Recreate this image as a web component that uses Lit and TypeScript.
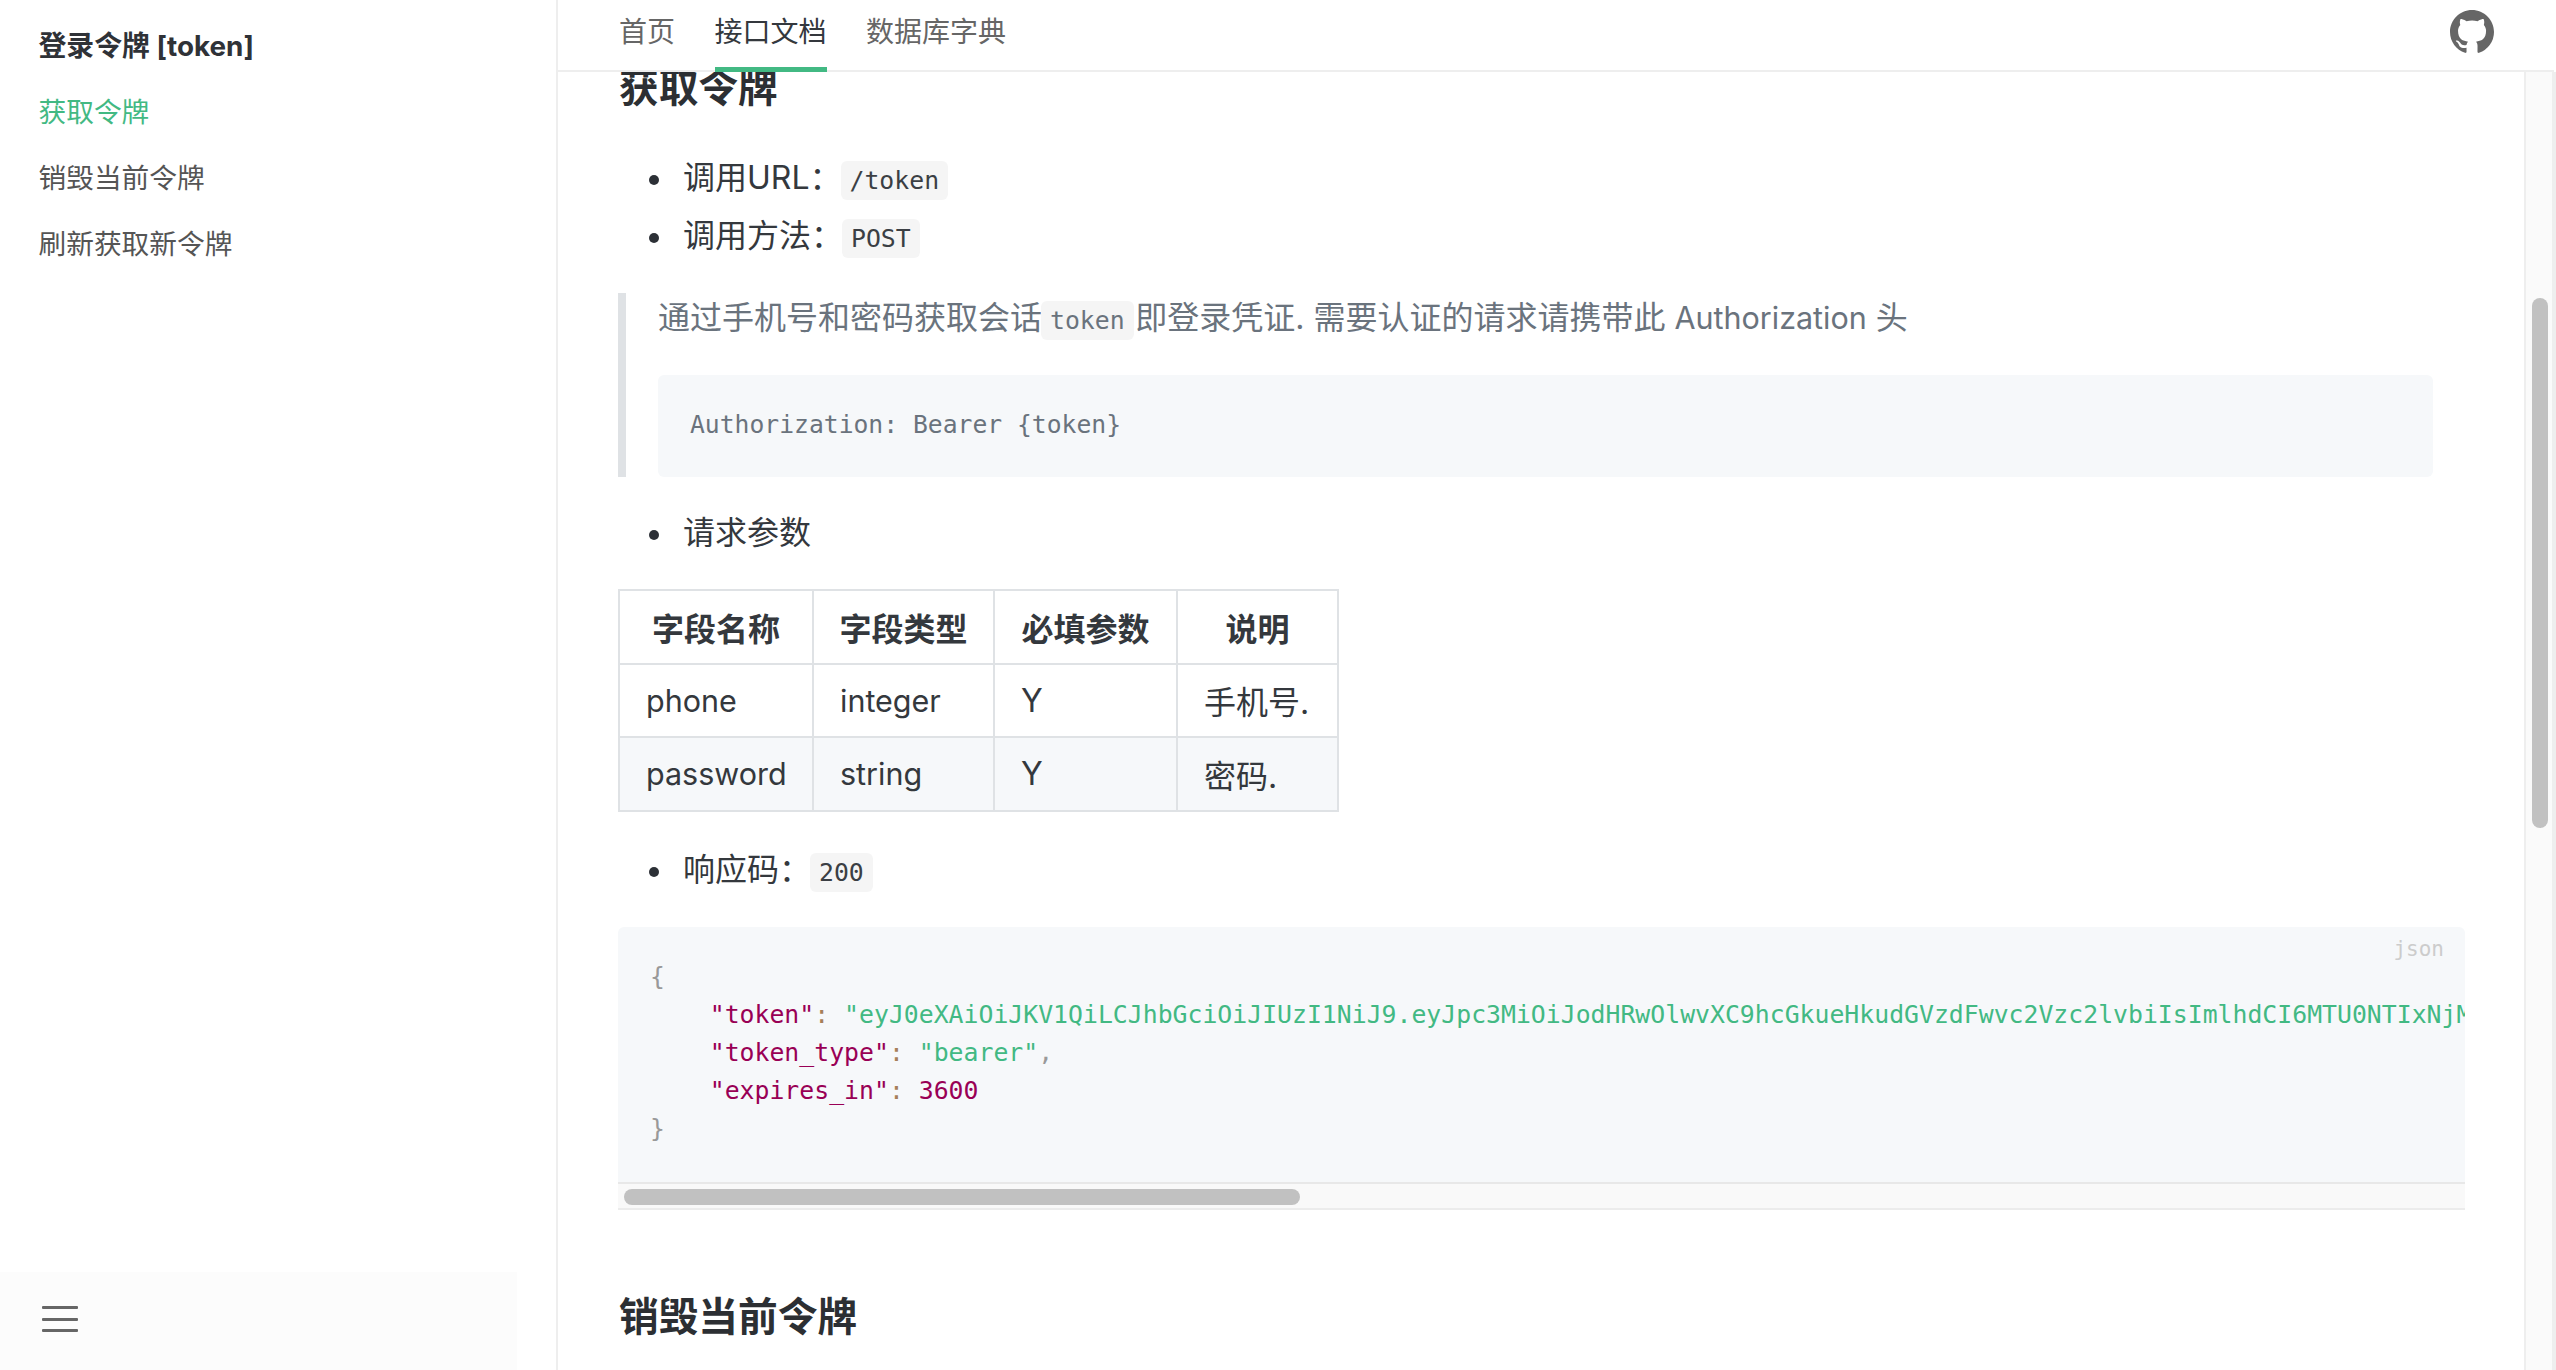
import { LitElement, html, css } from "lit";
import { customElement } from "lit/decorators.js";

const TOKEN = "eyJ0eXAiOiJKV1QiLCJhbGciOiJIUzI1NiJ9.eyJpc3MiOiJodHRwOlwvXC9hcGkueHkudGVzdFwvc2Vzc2lvbiIsImlhdCI6MTU0NTIxNjMzNSwiZXhwIjoxNTQ1MjE5OTM1";

@customElement("app-root")
export class AppRoot extends LitElement {
  static styles = css`
    :host {
      display: flex;
      width: 2556px;
      height: 1370px;
      overflow: hidden;
      background: #fff;
      color: #2c3e50;
      font-family: Inter, "Noto Sans CJK SC", sans-serif;
    }
    .sidebar {
      width: 556px;
      flex: none;
      display: flex;
      flex-direction: column;
      border-right: 2px solid #eee;
      box-sizing: content-box;
    }
    .side-nav {
      flex: 1;
      padding: 13px 0 0 38.5px;
      font-size: 27.7px;
    }
    .side-nav div {
      height: 66px;
      line-height: 66px;
      color: #555;
    }
    .side-nav .title { font-weight: 700; color: #2f3237; font-size: 27.85px; }
    .side-nav .active { color: #42b983; }
    .side-bottom {
      width: 517px;
      height: 98px;
      background: #fcfcfc;
      flex: none;
      padding: 34px 0 0 42px;
      box-sizing: border-box;
      display: flex;
      flex-direction: column;
      gap: 8.5px;
    }
    .side-bottom i {
      display: block;
      width: 36px;
      height: 3px;
      background: #666;
      border-radius: 1px;
    }
    .main {
      flex: 1;
      min-width: 0;
      display: flex;
      flex-direction: column;
    }
    .top {
      height: 72px;
      flex: none;
      box-sizing: border-box;
      border-bottom: 2px solid #eee;
      margin-right: 2px;
      padding: 0 60px 0 61px;
      display: flex;
      justify-content: space-between;
      background: #fff;
      position: relative;
      z-index: 2;
    }
    .tabs { display: flex; gap: 39.5px; font-size: 28px; color: #666; }
    .tab { height: 70px; line-height: 64px; box-sizing: border-box; }
    .tab.on { color: #34383d; border-bottom: 5px solid #42b983; height: 72px; }
    .gh { width: 44px; height: 44px; margin-top: 10px; fill: #666; }
    .body { flex: 1; display: flex; min-height: 0; }
    .content { flex: 1; min-width: 0; overflow: hidden; padding: 0 59px 0 60px; }
    article { margin-top: -9px; font-size: 32px; }
    h2 {
      margin: 0;
      font-size: 39.7px;
      line-height: 50px;
      font-weight: 700;
      color: #2c2f33;
      padding-left: 1px;
    }
    ul { margin: 0; padding: 0 0 0 65px; color: #34383d; list-style: none; }
    li { height: 58px; line-height: 58px; }
    li::before {
      content: "";
      display: inline-block;
      width: 10px;
      height: 10px;
      border-radius: 50%;
      background: #2c3036;
      vertical-align: middle;
      margin: 0 24px 0 -34px;
    }
    .u1 { margin-top: 36px; }
    code {
      font-family: "DejaVu Sans Mono", monospace;
      font-size: 24.8px;
      background: #f5f5f5;
      border-radius: 6px;
      padding: 5px 9px;
      color: #3b3f44;
      margin-left: -1px;
    }
    blockquote {
      margin: 28px 0 0;
      height: 184px;
      box-sizing: border-box;
      border-left: 8px solid #dfe2e5;
      padding: 0 32px;
      color: #6a737d;
    }
    blockquote p { margin: 0; height: 82px; line-height: 50px; }
    blockquote code { color: #6a737d; margin: 0 1.5px 0 -1px; }
    .la { font-size: 30.5px; }
    blockquote pre {
      margin: 0;
      height: 102px;
      line-height: 99px;
      background: #f6f8fa;
      border-radius: 6px;
      padding-left: 32px;
      font-family: "DejaVu Sans Mono", monospace;
      font-size: 24.7px;
    }
    .u2 { margin-top: 27px; }
    table {
      margin-top: 27px;
      border-collapse: collapse;
      font-size: 32px;
      color: #34383d;
      width: 719px;
      table-layout: fixed;
    }
    .c1 { width: 194px; }
    .c2 { width: 181px; }
    .c3 { width: 183px; }
    .c4 { width: 161px; }
    th, td {
      border: 2px solid #dfe2e5;
      height: 73.6px;
      padding: 0 20px 0 26px;
      box-sizing: border-box;
      text-align: left;
      font-weight: 400;
      white-space: nowrap;
    }
    th { font-weight: 700; text-align: center; padding: 0; }
    tr.alt td { background: #f6f8fa; }
    .u3 { margin-top: 29px; }
    .block {
      margin-top: 28px;
      position: relative;
      background: #f6f8fa;
      border-radius: 6px 6px 0 0;
      overflow: hidden;
      height: 283px;
    }
    .lang {
      position: absolute;
      top: 10px;
      right: 21px;
      font-family: "DejaVu Sans Mono", monospace;
      font-size: 21px;
      color: #ccc;
    }
    .block pre {
      margin: 0;
      height: 255px;
      box-sizing: border-box;
      padding: 31px 0 0 32px;
      line-height: 38px;
      font-family: "DejaVu Sans Mono", monospace;
      font-size: 24.8px;
      color: #999;
      overflow: hidden;
    }
    .k { color: #905; }
    .s { color: #42b983; }
    .p { color: #a67f59; }
    .hbar {
      height: 28px;
      box-sizing: border-box;
      background: #f9f9f9;
      border-top: 2px solid #e8e8e8;
      border-bottom: 2px solid #ececec;
      padding: 5px 0 0 6px;
    }
    .hbar i {
      display: block;
      width: 676px;
      height: 16px;
      border-radius: 8px;
      background: #c1c1c1;
    }
    .h2b { margin-top: 82px; }
    .vbar {
      width: 28px;
      flex: none;
      box-sizing: border-box;
      background: #fafafa;
      border-left: 2px solid #eee;
      padding: 226px 4px 0 6px;
    }
    .vbar i {
      display: block;
      height: 530px;
      border-radius: 8px;
      background: #c1c1c1;
    }
    .edge { width: 4px; flex: none; background: #eee; }
  `;

  render() {
    return html`
      <aside class="sidebar">
        <div class="side-nav">
          <div class="title">登录令牌 [token]</div>
          <div class="active">获取令牌</div>
          <div>销毁当前令牌</div>
          <div>刷新获取新令牌</div>
        </div>
        <div class="side-bottom"><i></i><i></i><i></i></div>
      </aside>
      <div class="main">
        <header class="top">
          <nav class="tabs">
            <div class="tab">首页</div>
            <div class="tab on">接口文档</div>
            <div class="tab">数据库字典</div>
          </nav>
          <svg class="gh" viewBox="0 0 16 16"><path d="M8 0C3.58 0 0 3.58 0 8c0 3.54 2.29 6.53 5.47 7.59.4.07.55-.17.55-.38 0-.19-.01-.82-.01-1.49-2.01.37-2.53-.49-2.69-.94-.09-.23-.48-.94-.82-1.13-.28-.15-.68-.52-.01-.53.63-.01 1.08.58 1.23.82.72 1.21 1.87.87 2.33.66.07-.52.28-.87.51-1.07-1.78-.2-3.64-.89-3.64-3.95 0-.87.31-1.59.82-2.15-.08-.2-.36-1.02.08-2.12 0 0 .67-.21 2.2.82.64-.18 1.32-.27 2-.27.68 0 1.36.09 2 .27 1.53-1.04 2.2-.82 2.2-.82.44 1.1.16 1.92.08 2.12.51.56.82 1.27.82 2.15 0 3.07-1.87 3.75-3.65 3.95.29.25.54.73.54 1.48 0 1.07-.01 1.93-.01 2.2 0 .21.15.46.55.38A8.013 8.013 0 0016 8c0-4.42-3.58-8-8-8z"/></svg>
        </header>
        <div class="body">
          <div class="content">
            <article>
              <h2>获取令牌</h2>
              <ul class="u1">
                <li>调用URL：<code>/token</code></li>
                <li>调用方法：<code>POST</code></li>
              </ul>
              <blockquote>
                <p>通过手机号和密码获取会话<code>token</code>即登录凭证. 需要认证的请求请携带此 <span class="la">Authorization</span> 头</p>
                <pre>Authorization: Bearer {token}</pre>
              </blockquote>
              <ul class="u2"><li>请求参数</li></ul>
              <table>
                <colgroup><col class="c1" /><col class="c2" /><col class="c3" /><col class="c4" /></colgroup>
                <tr><th>字段名称</th><th>字段类型</th><th>必填参数</th><th>说明</th></tr>
                <tr><td><span class="la">phone</span></td><td><span class="la">integer</span></td><td>Y</td><td>手机号.</td></tr>
                <tr class="alt"><td><span class="la">password</span></td><td><span class="la">string</span></td><td>Y</td><td>密码.</td></tr>
              </table>
              <ul class="u3"><li>响应码：<code>200</code></li></ul>
              <div class="block">
                <span class="lang">json</span>
                <pre>{
    <span class="k">"token"</span><span class="p">:</span> <span class="s">"${TOKEN}"</span>,
    <span class="k">"token_type"</span><span class="p">:</span> <span class="s">"bearer"</span>,
    <span class="k">"expires_in"</span><span class="p">:</span> <span class="k">3600</span>
}</pre>
                <div class="hbar"><i></i></div>
              </div>
              <h2 class="h2b">销毁当前令牌</h2>
            </article>
          </div>
          <div class="vbar"><i></i></div>
          <div class="edge"></div>
        </div>
      </div>
    `;
  }
}
